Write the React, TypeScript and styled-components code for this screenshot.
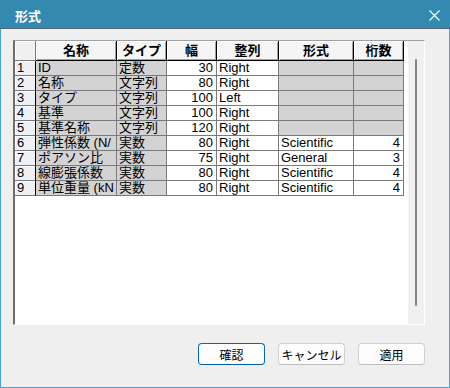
import React from 'react';
import styled, { createGlobalStyle } from 'styled-components';

const GlobalStyle = createGlobalStyle`
  html, body {
    margin: 0;
    padding: 0;
    background: #efefef;
  }
  * {
    box-sizing: border-box;
  }
`;

const FONT = `"Noto Sans CJK JP", "Noto Sans", sans-serif`;
const CELL_FONT = `"Liberation Sans", "Noto Sans CJK JP", sans-serif`;

type Align = 'left' | 'right';

interface Row {
  name: string;
  type: string;
  width: number;
  align: string;
  format?: string;
  digits?: number;
}

// names are shown as the narrow column cuts them
const rows: Row[] = [
  { name: 'ID', type: '定数', width: 30, align: 'Right' },
  { name: '名称', type: '文字列', width: 80, align: 'Right' },
  { name: 'タイプ', type: '文字列', width: 100, align: 'Left' },
  { name: '基準', type: '文字列', width: 100, align: 'Right' },
  { name: '基準名称', type: '文字列', width: 120, align: 'Right' },
  { name: '弾性係数 (N/', type: '実数', width: 80, align: 'Right', format: 'Scientific', digits: 4 },
  { name: 'ポアソン比', type: '実数', width: 75, align: 'Right', format: 'General', digits: 3 },
  { name: '線膨張係数', type: '実数', width: 80, align: 'Right', format: 'Scientific', digits: 4 },
  { name: '単位重量 (kN', type: '実数', width: 80, align: 'Right', format: 'Scientific', digits: 4 },
];

const headers = ['名称', 'タイプ', '幅', '整列', '形式', '桁数'];

export default function App() {
  return (
    <>
      <GlobalStyle />
      <Window>
        <TitleBar>
          <Title>形式</Title>
          <CloseButton aria-label="close">
            <svg width="11" height="11" viewBox="0 0 11 11">
              <path d="M0.5 0.5 L10.5 10.5 M10.5 0.5 L0.5 10.5" stroke="#fff" strokeWidth="1.1" />
            </svg>
          </CloseButton>
        </TitleBar>
        <Body>
          <GridFrame>
            <GridArea>
              <Grid>
                <CornerCell />
                {headers.map((h) => (
                  <HeaderCell key={h}>{h}</HeaderCell>
                ))}
                {rows.map((r, i) => (
                  <React.Fragment key={i}>
                    <RowHeadCell>{i + 1}</RowHeadCell>
                    <Cell $gray>{r.name}</Cell>
                    <Cell $gray>{r.type}</Cell>
                    <Cell $align="right">{r.width}</Cell>
                    <Cell>{r.align}</Cell>
                    <Cell $gray={!r.format}>{r.format ?? ''}</Cell>
                    <Cell $gray={r.digits === undefined} $align="right">
                      {r.digits ?? ''}
                    </Cell>
                  </React.Fragment>
                ))}
              </Grid>
            </GridArea>
            <ScrollTrack>
              <ScrollThumb />
            </ScrollTrack>
          </GridFrame>
          <ButtonRow>
            <DialogButton $primary>確認</DialogButton>
            <DialogButton>キャンセル</DialogButton>
            <DialogButton>適用</DialogButton>
          </ButtonRow>
        </Body>
      </Window>
    </>
  );
}

const Window = styled.div`
  width: 450px;
  height: 388px;
  display: flex;
  flex-direction: column;
  background: #efefef;
  border: 1px solid #44a5d6;
  border-top: none;
  font-family: ${FONT};
`;

const TitleBar = styled.div`
  height: 29px;
  margin: 0 -1px;
  display: flex;
  align-items: center;
  justify-content: space-between;
  background: #3489b1;
  border-bottom: 1px solid #586472;
  padding: 0 10px 0 15px;
`;

const Title = styled.div`
  color: #fff;
  font-size: 13px;
  font-weight: 700;
  line-height: 13px;
  padding-top: 2px;
`;

const CloseButton = styled.div`
  display: flex;
  align-items: center;
  justify-content: center;
  width: 11px;
  height: 11px;
  margin-top: 3px;
`;

const Body = styled.div`
  flex: 1;
  display: flex;
  flex-direction: column;
  padding: 11px 24px 0 12px;
`;

const GridFrame = styled.div`
  height: 285px;
  display: flex;
  border-top: 1px solid #a0a0a0;
  border-left: 2px solid #6e6e6e;
  border-right: 1px solid #ffffff;
  border-bottom: 1px solid #ffffff;
`;

const GridArea = styled.div`
  flex: 1;
  background: #ffffff;
  overflow: hidden;
`;

const Grid = styled.div`
  display: grid;
  grid-template-columns: 21px 81px 50px 50px 62px 75px 50px;
  grid-template-rows: 20px repeat(9, 15px);
  width: 389px;
`;

const BaseCell = styled.div`
  font-family: ${CELL_FONT};
  font-size: 13px;
  line-height: 14px;
  white-space: nowrap;
  overflow: hidden;
  color: #000;
  border-right: 1px solid #7a7a7a;
  border-bottom: 1px solid #7a7a7a;
`;

const CornerCell = styled(BaseCell)`
  background: #f0f0f0;
  box-shadow: inset 1px 1px 0 #ffffff;
`;

const HeaderCell = styled(BaseCell)`
  font-family: ${FONT};
  background: #f5f5f5;
  font-weight: 700;
  text-align: center;
  line-height: 18px;
  border-right: 1px solid #000;
  border-bottom: 1px solid #000;
  box-shadow: inset 1px 1px 0 #ffffff, inset -1px -1px 0 #a0a0a0;
`;

const RowHeadCell = styled(BaseCell)`
  background: #eef0f4;
  padding-left: 2px;
  border-right: 1px solid #000;
  box-shadow: inset 1px 1px 0 #ffffff;
`;

const Cell = styled(BaseCell)<{ $gray?: boolean; $align?: Align }>`
  background: ${(p) => (p.$gray ? '#d3d3d3' : '#ffffff')};
  text-align: ${(p) => p.$align ?? 'left'};
  padding: ${(p) => (p.$align === 'right' ? '0 3px 0 0' : '0 0 0 2px')};
`;

const ScrollTrack = styled.div`
  width: 16px;
  background: #f0f0f0;
  display: flex;
  justify-content: center;
  padding: 18px 0;
`;

const ScrollThumb = styled.div`
  width: 2px;
  height: 100%;
  border-radius: 1px;
  background: #858585;
`;

const ButtonRow = styled.div`
  display: flex;
  justify-content: flex-end;
  gap: 13px;
  margin-top: 18px;
`;

const DialogButton = styled.button<{ $primary?: boolean }>`
  width: 67px;
  height: 22px;
  padding: 0;
  font-family: ${FONT};
  font-size: 12px;
  color: #000;
  background: #fdfdfd;
  border: 1px solid ${(p) => (p.$primary ? '#0067c0' : '#d0d0d0')};
  border-bottom-color: ${(p) => (p.$primary ? '#0058a8' : '#bcbcbc')};
  border-radius: 4px;
`;
